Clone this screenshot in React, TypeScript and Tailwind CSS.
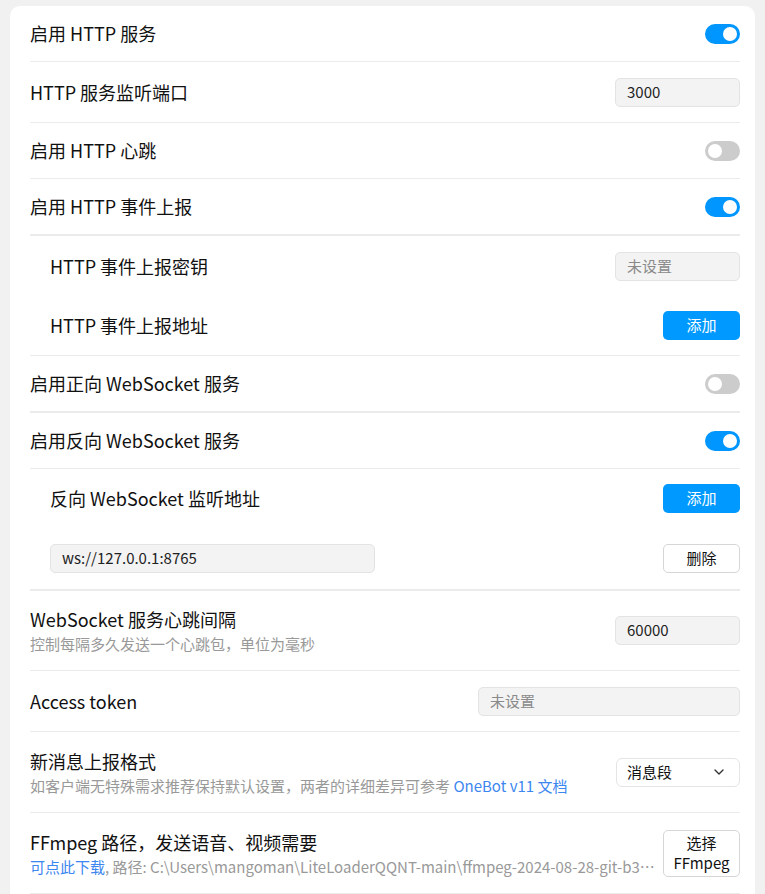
import { ChevronDown } from "lucide-react"

function Toggle({ on }: { on: boolean }) {
    return (
        <div className={on ? "w-[35px] h-[20px] rounded-full bg-[#0096ff] flex items-center justify-end px-[3px]" : "w-[35px] h-[20px] rounded-full bg-[#cccccc] flex items-center justify-start px-[3px]"}>
            <div className="w-[14px] h-[14px] rounded-full bg-white" />
        </div>
    )
}

function Field({ value, placeholder, width }: { value?: string; placeholder?: string; width: string }) {
    return (
        <div className={`${width} h-[29px] rounded-[5px] bg-[#f3f3f3] border border-[#e3e3e3] flex items-center px-[11px] text-[15px]`}>
            {value ? <span className="text-[#222]">{value}</span> : <span className="text-[#8a8a8a]">{placeholder}</span>}
        </div>
    )
}

function BlueButton({ text }: { text: string }) {
    return (
        <button className="w-[77px] h-[29px] rounded-[5px] bg-[#0099ff] text-white text-[15px] flex items-center justify-center">
            {text}
        </button>
    )
}

function Row({ label, children, className, sub }: { label: string; children?: React.ReactNode; className: string; sub?: boolean }) {
    return (
        <div className={`flex items-center justify-between ${className}`}>
            <span className={sub ? "pl-5 text-[18px] text-[#111]" : "text-[18px] text-[#111]"}>{label}</span>
            {children}
        </div>
    )
}

function App() {
    return (
        <div className="min-h-[894px] bg-[#f1f1f1] pt-[6px] pl-[10px] pr-[10px] overflow-hidden font-['Noto_Sans_CJK_SC',sans-serif]">
            <div className="bg-white rounded-t-[10px] pl-5 pr-[15px] h-[900px]">
                <Row label="启用 HTTP 服务" className="h-[56px] border-b border-[#ebebeb]">
                    <Toggle on={true} />
                </Row>
                <Row label="HTTP 服务监听端口" className="h-[61px] border-b border-[#ebebeb]">
                    <Field value="3000" width="w-[125px]" />
                </Row>
                <Row label="启用 HTTP 心跳" className="h-[56px] border-b border-[#ebebeb]">
                    <Toggle on={false} />
                </Row>
                <Row label="启用 HTTP 事件上报" className="h-[57px] border-b-2 border-[#ebebeb]">
                    <Toggle on={true} />
                </Row>
                <Row label="HTTP 事件上报密钥" sub className="h-[60px]">
                    <Field placeholder="未设置" width="w-[125px]" />
                </Row>
                <Row label="HTTP 事件上报地址" sub className="h-[60px] border-b border-[#ebebeb]">
                    <BlueButton text="添加" />
                </Row>
                <Row label="启用正向 WebSocket 服务" className="h-[57px] border-b-2 border-[#ebebeb]">
                    <Toggle on={false} />
                </Row>
                <Row label="启用反向 WebSocket 服务" className="h-[56px] border-b border-[#ebebeb]">
                    <Toggle on={true} />
                </Row>
                <Row label="反向 WebSocket 监听地址" sub className="h-[59px]">
                    <BlueButton text="添加" />
                </Row>
                <div className="h-[63px] flex items-center justify-between pl-5 border-b-2 border-[#ebebeb]">
                    <Field value="ws://127.0.0.1:8765" width="w-[325px]" />
                    <button className="w-[77px] h-[29px] rounded-[5px] bg-white border border-[#d6d6d6] text-[15px] text-[#111] flex items-center justify-center">
                        删除
                    </button>
                </div>
                <div className="h-[80px] flex items-center justify-between border-b border-[#ebebeb]">
                    <div className="flex flex-col gap-[3px]">
                        <span className="text-[18px] leading-[24px] text-[#111]">WebSocket 服务心跳间隔</span>
                        <span className="text-[15px] leading-[20px] text-[#999]">控制每隔多久发送一个心跳包，单位为毫秒</span>
                    </div>
                    <Field value="60000" width="w-[125px]" />
                </div>
                <Row label="Access token" className="h-[61px] border-b border-[#ebebeb]">
                    <Field placeholder="未设置" width="w-[262px]" />
                </Row>
                <div className="h-[81px] flex items-center justify-between border-b border-[#ebebeb]">
                    <div className="flex flex-col gap-[3px]">
                        <span className="text-[18px] leading-[24px] text-[#111]">新消息上报格式</span>
                        <span className="text-[15px] leading-[20px] text-[#999]">
                            如客户端无特殊需求推荐保持默认设置，两者的详细差异可参考 <span className="text-[#3c86f0]">OneBot v11 文档</span>
                        </span>
                    </div>
                    <div className="w-[124px] h-[29px] rounded-[6px] bg-white border border-[#e5e5e5] flex items-center justify-between pl-[10px] pr-[12px] text-[15px] text-[#111]">
                        <span>消息段</span>
                        <ChevronDown size={16} strokeWidth={2} className="text-[#333]" />
                    </div>
                </div>
                <div className="h-[81px] flex items-center justify-between gap-2 border-b border-[#ebebeb]">
                    <div className="flex flex-col gap-[3px] min-w-0">
                        <span className="text-[18px] leading-[24px] text-[#111]">FFmpeg 路径，发送语音、视频需要</span>
                        <span className="text-[15px] leading-[20px] text-[#999] truncate">
                            <span className="text-[#3c86f0]">可点此下载</span>, 路径: C:\Users\mangoman\LiteLoaderQQNT-main\ffmpeg-2024-08-28-git-b33b0ac47e-full_build\bin\ffmpeg.exe
                        </span>
                    </div>
                    <button className="shrink-0 w-[77px] h-[47px] rounded-[5px] bg-white border border-[#d6d6d6] text-[15px] text-[#111] flex flex-col items-center justify-center">
                        <span className="block leading-[20px]">选择</span>
                        <span className="block leading-[20px]">FFmpeg</span>
                    </button>
                </div>
            </div>
        </div>
    )
}
export default App
